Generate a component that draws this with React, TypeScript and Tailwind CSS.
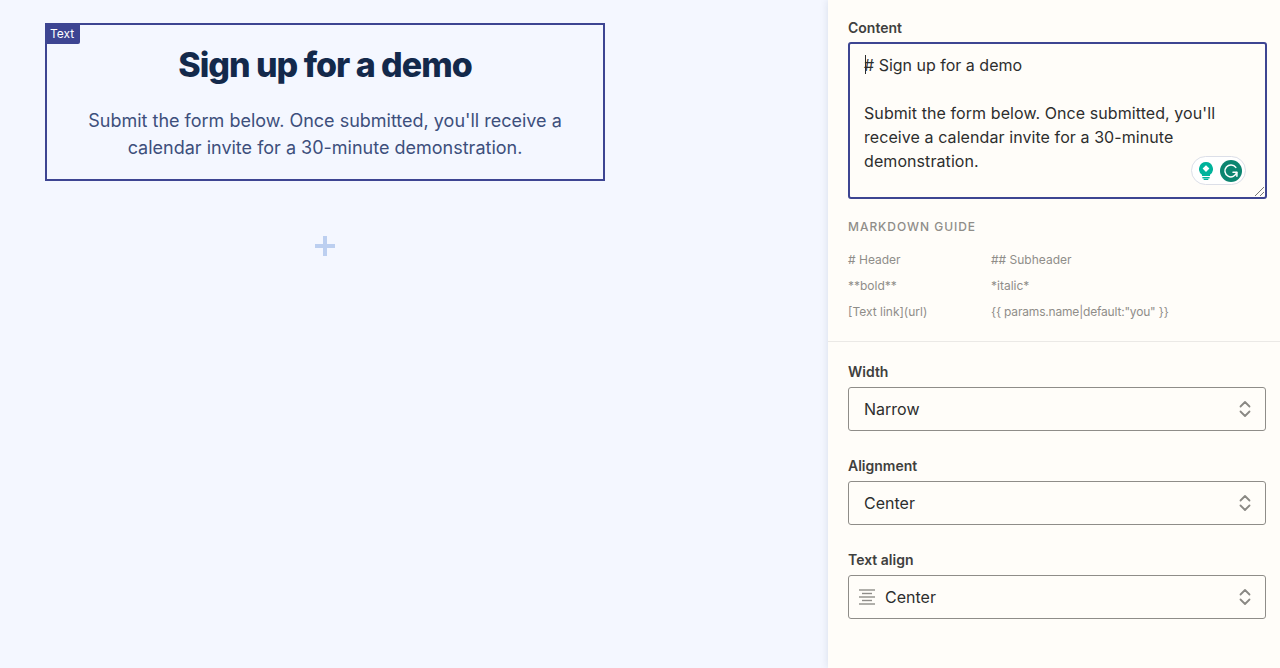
import { ReactNode } from 'react';

function Chevrons() {
  return (
    <svg width="14" height="18" viewBox="0 0 14 18" fill="none" stroke="#8a8884" strokeWidth="1.8" strokeLinecap="round" strokeLinejoin="round">
      <path d="M2.5 6.5 7 2l4.5 4.5" />
      <path d="M2.5 11.5 7 16l4.5-4.5" />
    </svg>
  );
}

function AlignCenterIcon() {
  return (
    <svg width="16" height="16" viewBox="0 0 16 16" fill="none" stroke="#8f8d89" strokeWidth="1.4">
      <path d="M0 1h16" />
      <path d="M3 4.5h10" />
      <path d="M0 8h16" />
      <path d="M3 11.5h10" />
      <path d="M0 15h16" />
    </svg>
  );
}

function SelectField({ label, value, icon }: { label: string; value: string; icon?: ReactNode }) {
  return (
    <div>
      <div className="text-sm leading-[18px] font-semibold text-[#403f3e] mb-1.5">{label}</div>
      <div className={`h-11 flex items-center justify-between rounded-[3px] border border-[#8f8d89] pr-[13px] ${icon ? 'pl-[10px]' : 'pl-[15px]'}`}>
        <div className="flex items-center gap-[10px]">
          {icon}
          <span className="text-base text-[#2d2e2e]">{value}</span>
        </div>
        <Chevrons />
      </div>
    </div>
  );
}

export default function App() {
  return (
    <div className="h-[668px] w-[1280px] overflow-hidden flex bg-[#f4f7ff] font-['Inter',sans-serif]">
      {/* canvas */}
      <div className="w-[828px] pt-[23px] pl-[45px]">
        <div className="relative w-[560px] h-[158px] border-2 border-[#3d4592] pt-[18px] text-center">
          <span className="absolute -left-[1px] -top-[1px] h-[20px] w-[34px] pl-[4px] text-left bg-[#3d4592] text-white text-xs leading-[20px] rounded-br-[2px]">Text</span>
          <h1 className="text-[34px] leading-[44px] font-extrabold tracking-[-0.03em] text-[#13294b]">Sign up for a demo</h1>
          <p className="mt-[20px] px-[30px] text-lg leading-[27px] text-[#3d4f7c]">
            Submit the form below. Once submitted, you'll receive a calendar invite for a 30-minute demonstration.
          </p>
        </div>
        <div className="w-[560px] flex justify-center mt-[55px]">
          <svg width="20" height="20" viewBox="0 0 20 20" fill="#bccff0">
            <path d="M8 0h4v8h8v4h-8v8H8v-8H0V8h8z" />
          </svg>
        </div>
      </div>

      {/* settings panel */}
      <div className="w-[452px] bg-[#fffdf9] shadow-[0_0_8px_rgba(19,41,75,0.12)]">
        <div className="px-5 pt-[19px] pb-[21px] border-b border-[#ebe9e6]">
          <div className="text-sm leading-[18px] font-semibold text-[#403f3e] mb-[5px]">Content</div>
          <div className="relative w-[419px] h-[157px] rounded-[3px] border-2 border-[#3d4592] pl-[14px] pt-[9px] text-base leading-6 text-[#2d2e2e]">
            <span className="absolute left-[15px] top-[11px] w-px h-[19px] bg-[#2d2e2e]" />
            <div># Sign up for a demo</div>
            <div className="mt-6 w-[370px] tracking-[0.005em]">Submit the form below. Once submitted, you'll receive a calendar invite for a 30-minute demonstration.</div>
            <div className="absolute right-[19px] bottom-[12px] w-[55px] h-[29px] rounded-full border border-[#dcdfe8] bg-white flex items-center pl-[7px] gap-[7px]">
              <svg width="14" height="18" viewBox="0 0 14 18">
                <path d="M7 0a7 7 0 0 0-4 12.7V14h8v-1.3A7 7 0 0 0 7 0z" fill="#00b39b" />
                <path d="M7 3.2 10.4 6.6 7 10 3.6 6.6z" fill="#ffffff" />
                <rect x="3.2" y="15" width="7.6" height="1.4" rx="0.7" fill="#00b39b" />
                <rect x="4.6" y="16.8" width="4.8" height="1.2" rx="0.6" fill="#00b39b" />
              </svg>
              <svg width="22" height="22" viewBox="0 0 22 22">
                <circle cx="11" cy="11" r="11" fill="#0b8570" />
                <path d="M15.8 7.4A6 6 0 1 0 16.7 12.5" fill="none" stroke="#ffffff" strokeWidth="1.5" strokeLinecap="round" />
                <path d="M13 12.3h3.9v3.9" fill="none" stroke="#ffffff" strokeWidth="1.5" strokeLinecap="round" strokeLinejoin="round" />
              </svg>
            </div>
            <svg className="absolute right-[1px] bottom-[1px]" width="9" height="9" viewBox="0 0 9 9" stroke="#777" strokeWidth="1">
              <path d="M0 9 9 0M5 9l4-4" />
            </svg>
          </div>
          <div className="mt-[20px] text-xs leading-4 font-medium tracking-[0.08em] text-[#8f8d89]">MARKDOWN GUIDE</div>
          <div className="mt-[17px] grid grid-cols-[143px_1fr] gap-y-[10px] text-xs leading-4 text-[#8f8d89]">
            <span># Header</span>
            <span>## Subheader</span>
            <span>**bold**</span>
            <span>*italic*</span>
            <span>[Text link](url)</span>
            <span className="tracking-[-0.015em]">{'{{ params.name|default:"you" }}'}</span>
          </div>
        </div>
        <div className="pl-5 pr-[14px] pt-[21px] flex flex-col gap-[26px]">
          <SelectField label="Width" value="Narrow" />
          <SelectField label="Alignment" value="Center" />
          <SelectField label="Text align" value="Center" icon={<AlignCenterIcon />} />
        </div>
      </div>
    </div>
  );
}
